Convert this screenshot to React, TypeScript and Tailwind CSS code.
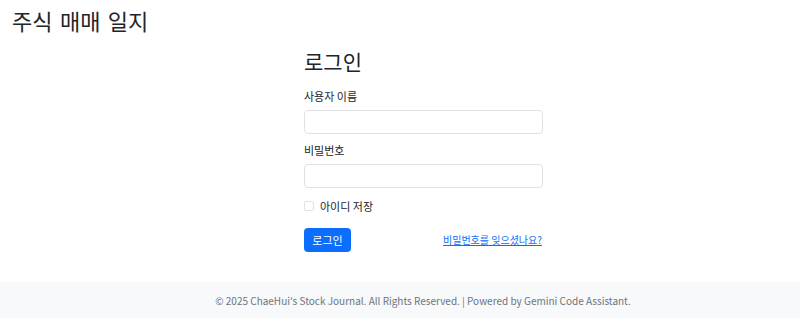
export default function App() {
  const font = { fontFamily: '"Noto Sans CJK KR", "Noto Sans", sans-serif' };
  return (
    <div className="w-[800px] h-[318px] flex flex-col bg-white text-[#212529]" style={font}>
      <header className="h-[40px] pl-[12px] pt-[5px]">
        <h1 className="text-[22px] leading-[30px] font-normal text-[#212529] [word-spacing:2.5px]">주식 매매 일지</h1>
      </header>
      <main className="flex-1">
        <div className="ml-[304px] w-[239px] flex flex-col">
          <h2 className="text-[21px] leading-[28px] mt-[7px] mb-[13px] font-normal">로그인</h2>
          <label className="text-[11px] leading-[16px] mb-[6px]">사용자 이름</label>
          <input className="h-[24px] w-full border border-[#dee2e6] rounded-[4px] bg-white px-2 text-[11px] outline-none" />
          <label className="text-[11px] leading-[16px] mt-[8px] mb-[6px]">비밀번호</label>
          <input type="password" className="h-[24px] w-full border border-[#dee2e6] rounded-[4px] bg-white px-2 text-[11px] outline-none" />
          <div className="flex items-center mt-[11px] h-[14px]">
            <span className="w-[10px] h-[10px] border border-[#dee2e6] rounded-[2px] bg-white" />
            <span className="ml-[6px] text-[11px] leading-[14px]">아이디 저장</span>
          </div>
          <div className="flex items-center justify-between mt-[15px]">
            <button className="w-[47px] h-[24px] rounded-[4px] bg-[#0d6efd] text-white text-[11px] leading-[24px]">로그인</button>
            <a href="#" className="text-[10px] text-[#0d6efd] underline leading-[14px] mr-[1px]">비밀번호를 잊으셨나요?</a>
          </div>
        </div>
      </main>
      <footer className="h-[36px] bg-[#f8f9fa] flex items-center justify-center pl-[46px]">
        <p className="text-[10px] text-[#6c757d]">© 2025 ChaeHui's Stock Journal. All Rights Reserved. | Powered by Gemini Code Assistant.</p>
      </footer>
    </div>
  );
}
